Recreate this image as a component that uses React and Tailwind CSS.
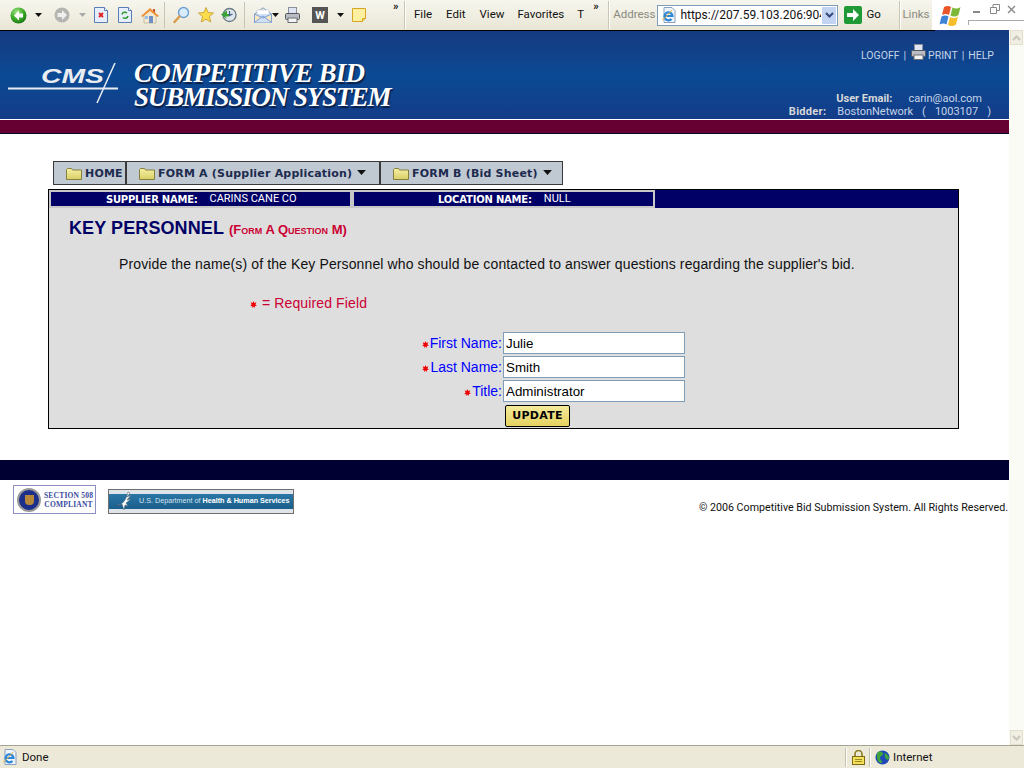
import React from "react";

const uiFont = "font-['Roboto','Noto_Sans',sans-serif]";

function Caret({ className = "" }) {
    return (
        <svg width="7" height="4" viewBox="0 0 7 4" className={className}>
            <path d="M0 0h7L3.500 4z" fill="#111" />
        </svg>
    );
}

function BackIcon() {
    return (
        <svg width="17" height="17" viewBox="0 0 17 17">
            <defs>
                <radialGradient id="backGreen" cx="40%" cy="30%" r="75%">
                    <stop offset="0" stopColor="#a6e88a" />
                    <stop offset="0.55" stopColor="#3eab2b" />
                    <stop offset="1" stopColor="#13720f" />
                </radialGradient>
            </defs>
            <circle cx="8.500" cy="8.500" r="8" fill="url(#backGreen)" />
            <path d="M9 3.500 4 8.500l5 5v-3h4v-4H9z" fill="#fff" />
        </svg>
    );
}

function ForwardIcon() {
    return (
        <svg width="16" height="16" viewBox="0 0 16 16">
            <circle cx="8" cy="8" r="7.500" fill="#b4b4b0" />
            <path d="M8 3l5 5-5 5v-3H3.500V6H8z" fill="#f0f0ee" />
        </svg>
    );
}

function PageIcon({ children }) {
    return (
        <svg width="14" height="16" viewBox="0 0 14 16">
            <path d="M.5.5h10l3 3v12H.5z" fill="#e6eefb" stroke="#5a7fb8" />
            <path d="M10.500.5v3h3" fill="#fff" stroke="#5a7fb8" />
            {children}
        </svg>
    );
}

function HomeIcon() {
    return (
        <svg width="18" height="17" viewBox="0 0 18 17">
            <path d="M3 8v8h12V8L9 3z" fill="#f4ead2" stroke="#a9a18b" strokeWidth=".6" />
            <path d="M0 9 9 1l9 8-1.500 1L9 4 1.500 10z" fill="#ef9238" />
            <path d="M12 2h2v4l-2-2z" fill="#c8552c" />
            <rect x="8" y="9" width="4" height="7" fill="#6f8fc7" />
            <rect x="4" y="9" width="3" height="3" fill="#9cc0ee" />
        </svg>
    );
}

function SearchIcon() {
    return (
        <svg width="17" height="18" viewBox="0 0 17 18">
            <circle cx="10.500" cy="6.500" r="5" fill="#d8ecfb" stroke="#6c9fd0" strokeWidth="1.400" />
            <path d="M6.500 10.500 1.500 16" stroke="#d59b4a" strokeWidth="2.400" strokeLinecap="round" />
        </svg>
    );
}

function StarIcon() {
    return (
        <svg width="16" height="16" viewBox="0 0 16 16">
            <path d="M8 .5l2.200 5 5.300.5-4 3.600 1.200 5.400L8 12.200 3.300 15l1.200-5.400-4-3.600 5.300-.5z" fill="#fbdc4c" stroke="#c2982a" strokeWidth=".8" />
        </svg>
    );
}

function HistoryIcon() {
    return (
        <svg width="16" height="16" viewBox="0 0 16 16">
            <circle cx="8.500" cy="8" r="6.500" fill="#dfe6ec" stroke="#6b7a84" strokeWidth="1.300" />
            <path d="M8.500 4v4.500l3-1.500" stroke="#3a5a8a" strokeWidth="1.200" fill="none" />
            <path d="M0 7.500 6 3.500v3.500h2v2.500H4.500L6 12z" fill="#3ba136" />
        </svg>
    );
}

function MailIcon() {
    return (
        <svg width="18" height="16" viewBox="0 0 18 16">
            <path d="M.5 7 9 .8 17.500 7v8.500H.5z" fill="#f6e7bf" stroke="#7c9fd4" />
            <path d="M3 7V3h12v4l-6 4z" fill="#fff" stroke="#b9c7de" strokeWidth=".6" />
            <path d="M.5 15.500 9 9l8.500 6.500M.5 7 9 11l8.500-4" fill="#cfe0f8" stroke="#7c9fd4" />
        </svg>
    );
}

function PrintIcon() {
    return (
        <svg width="15" height="16" viewBox="0 0 15 16">
            <rect x="3.500" y=".5" width="8" height="6" fill="#dfe4f4" stroke="#8b8f9a" />
            <rect x=".5" y="6.500" width="14" height="6" rx="1" fill="#b9bcc3" stroke="#55585f" />
            <rect x="3" y="11" width="9" height="4.500" fill="#f3f3f3" stroke="#6c6f76" />
        </svg>
    );
}

function NoteIcon() {
    return (
        <svg width="14" height="14" viewBox="0 0 14 14">
            <path d="M.5.5h13v10l-3 3H.5z" fill="#fdf0a0" stroke="#d9a520" />
            <path d="M13.500 10.500h-3v3" fill="#f1d873" stroke="#d9a520" />
        </svg>
    );
}

function IeIcon() {
    return (
        <svg width="16" height="16" viewBox="0 0 16 16">
            <path d="M3 .5h8l3 3v12H3z" fill="#eef3fb" stroke="#8aa0bf" />
            <path d="M3.500 9h8a4 4 0 1 0-1 3" fill="none" stroke="#2c86d8" strokeWidth="2.200" />
            <path d="M1 13c2-1 8-7 10-10" stroke="#f0b93a" strokeWidth="1" fill="none" />
        </svg>
    );
}

function WinFlag() {
    return (
        <svg width="25" height="23" viewBox="0 0 25 23">
            <path d="M5 3c2.500-1.500 5-1.500 7 0l-2 8c-2-1.500-4.500-1.500-7 0z" fill="#e8562a" />
            <path d="M13.500 3.500c2.500 1.500 5 1.500 8-.5l-2 8c-3 2-5.500 2-8 .5z" fill="#7cb83a" />
            <path d="M2.500 12.500c2.500-1.500 5-1.500 7 0l-2 8c-2-1.500-4.500-1.500-7 0z" fill="#3d83d8" />
            <path d="M11 13c2.500 1.500 5 1.500 8-.5l-2 8c-3 2-5.500 2-8 .5z" fill="#f4bf2a" />
        </svg>
    );
}

function Folder() {
    return (
        <svg width="16" height="12" viewBox="0 0 16 12">
            <defs>
                <linearGradient id="folderFill" x1="0" y1="0" x2="0" y2="1">
                    <stop offset="0" stopColor="#f6f0a4" />
                    <stop offset="1" stopColor="#d9cf66" />
                </linearGradient>
            </defs>
            <path d="M.5 11.500V1.500l1-1h4l1 1.500h9v9.500z" fill="url(#folderFill)" stroke="#85803e" />
        </svg>
    );
}

function Req({ className = "" }) {
    return (
        <svg width="7" height="7" viewBox="0 0 7 7" className={`shrink-0 mt-[3px] ${className}`}>
            <path d="M3.500 0l.8 2 2-.8-.9 2.300 1.600 1-2 .4L4.500 7l-1-1.500L2.500 7l-.4-2.100-2 .4 1.500-1.800L.7 1.300l2 .7z" fill="#f00000" />
        </svg>
    );
}

function Toolbar() {
    return (
        <div className={`h-[30px] shrink-0 flex items-center bg-gradient-to-b from-[#f7f6ee] to-[#e9e6d6] text-[11.500px] text-[#111] ${uiFont}`}>
            <div className="ml-[10px]"><BackIcon /></div>
            <Caret className="ml-[8px]" />
            <div className="ml-[12px]"><ForwardIcon /></div>
            <svg width="7" height="4" viewBox="0 0 7 4" className="ml-[9px]"><path d="M0 0h7L3.500 4z" fill="#aaa" /></svg>
            <div className="ml-[8px]">
                <PageIcon><path d="M5 6l4 4M9 6l-4 4" stroke="#e02020" strokeWidth="1.800" /></PageIcon>
            </div>
            <div className="ml-[10px]">
                <PageIcon>
                    <path d="M4 7.500a3 3 0 0 1 5-1.500" stroke="#2a9a2a" strokeWidth="1.500" fill="none" />
                    <path d="M10 9a3 3 0 0 1-5 1.500" stroke="#2a9a2a" strokeWidth="1.500" fill="none" />
                </PageIcon>
            </div>
            <div className="ml-[9px]"><HomeIcon /></div>
            <div className="ml-[5px] w-px h-[26px] bg-[#c8c5b2]" />
            <div className="ml-[8px]"><SearchIcon /></div>
            <div className="ml-[8px]"><StarIcon /></div>
            <div className="ml-[7px]"><HistoryIcon /></div>
            <div className="ml-[7px] w-px h-[26px] bg-[#c8c5b2]" />
            <div className="ml-[9px]"><MailIcon /></div>
            <Caret />
            <div className="ml-[6px]"><PrintIcon /></div>
            <div className="ml-[12px] w-[16px] h-[16px] bg-[#555] flex items-center justify-center text-white text-[11px] font-bold leading-none">W</div>
            <Caret className="ml-[9px]" />
            <div className="ml-[8px]"><NoteIcon /></div>
            <div className="ml-[27px] mb-[18px] w-[10px] text-[11px] font-bold leading-none">»</div>
            <div className="ml-px w-[2px] h-[28px] bg-white border-l border-[#c8c5b2]" />
            <span className="ml-[8px]">File</span>
            <span className="ml-[14px]">Edit</span>
            <span className="ml-[14px]">View</span>
            <span className="ml-[13px]">Favorites</span>
            <span className="ml-[13px]">T</span>
            <div className="ml-[9px] mb-[18px] w-[10px] text-[11px] font-bold leading-none">»</div>
            <div className="ml-[5px] w-[2px] h-[28px] bg-white border-l border-[#c8c5b2]" />
            <span className="ml-[3px] text-[#8a8a80]">Address</span>
            <div className="ml-[2px] w-[181px] h-[21px] flex items-center border border-[#7f9db9] bg-white">
                <div className="ml-[3px] shrink-0"><IeIcon /></div>
                <span className="ml-[3px] w-[142px] overflow-hidden whitespace-nowrap text-[12px]">https://207.59.103.206:9045</span>
                <div className="w-[16px] h-[19px] bg-[#c3d4f3] border border-white flex items-center justify-center">
                    <svg width="9" height="6" viewBox="0 0 9 6"><path d="M1 1l3.500 3.500L8 1" stroke="#33487a" strokeWidth="2" fill="none" /></svg>
                </div>
            </div>
            <div className="ml-[6px] w-[18px] h-[18px] rounded-[2px] bg-[#1f9a36] flex items-center justify-center">
                <svg width="14" height="12" viewBox="0 0 14 12"><path d="M7 0l6 6-6 6V8H1V4h6z" fill="#fff" /></svg>
            </div>
            <span className="ml-[4px] w-[14px]">Go</span>
            <div className="ml-[19px] w-[2px] h-[28px] bg-white border-l border-[#c8c5b2]" />
            <span className="ml-px w-[24px] text-[#8a8a80]">Links</span>
            <div className="ml-[6px] flex-1 h-full bg-white flex items-center relative">
                <div className="ml-[7px]"><WinFlag /></div>
                <div className="ml-[9px] mb-[7px] w-[7px] h-[2px] bg-[#888]" />
                <svg width="10" height="10" viewBox="0 0 10 10" className="ml-[10px] mb-[12px]">
                    <path d="M.5 3.500h6v6h-6zM3 3V.5h6.500v6H7" fill="none" stroke="#888" />
                </svg>
                <svg width="9" height="9" viewBox="0 0 9 9" className="ml-[7px] mb-[12px]">
                    <path d="M1 1l7 7M8 1L1 8" stroke="#888" strokeWidth="1.400" />
                </svg>
                <div className="absolute left-[36px] right-0 top-[20px] h-[5px] border-l border-t border-[#aaa]" />
            </div>
        </div>
    );
}

function CmsLogo() {
    return (
        <svg width="112" height="42" viewBox="0 0 112 42" className="shrink-0">
            <text x="33" y="20" fill="#e9edf2" fontFamily="'Liberation Sans', sans-serif" fontWeight="700" fontStyle="italic" fontSize="20" textLength="63" lengthAdjust="spacingAndGlyphs">CMS</text>
            <path d="M0 25.500h110" stroke="#e9edf2" strokeWidth="2" />
            <path d="M89 40 107 0" stroke="#e9edf2" strokeWidth="1.500" />
        </svg>
    );
}

function Header() {
    return (
        <div>
            <div className="h-px bg-[#153a80]"><div className="w-[935px] h-px bg-black" /></div>
            <div className="h-[88px] flex justify-between bg-gradient-to-b from-[#153a80] via-[#0a4a94] to-[#133c88]">
                <div className="flex items-start pl-[8px] pt-[32px]">
                    <CmsLogo />
                    <div className="ml-[14px] -mt-[2px] font-['Liberation_Serif',serif] font-bold italic text-[27px] leading-[24px] text-white [text-shadow:1px_2px_1px_#0a1f44] whitespace-nowrap">
                        <div className="tracking-[-0.7px]">COMPETITIVE BID</div>
                        <div className="tracking-[-1.300px]">SUBMISSION SYSTEM</div>
                    </div>
                </div>
                <div className={`flex flex-col items-end pr-[15px] pt-[15px] text-[11px] leading-[13px] text-[#c5d4e8] ${uiFont}`}>
                    <div className="flex items-center h-[18px] text-[10.500px]">
                        <span>LOGOFF</span>
                        <span className="ml-[4px]">|</span>
                        <div className="ml-[5px] mb-[6px]"><PrintIcon /></div>
                        <span className="ml-[2px]">PRINT</span>
                        <span className="ml-[4px]">|</span>
                        <span className="ml-[4px]">HELP</span>
                    </div>
                    <div className="mt-[28px] mr-[12px] flex">
                        <span className="font-bold text-[#d8d8d8]">User Email:</span>
                        <span className="ml-[16px]">carin@aol.com</span>
                    </div>
                    <div className="flex mr-[3px]">
                        <span className="font-bold text-[#d8d8d8] tracking-[0.3px]">Bidder:</span>
                        <span className="ml-[11px]">BostonNetwork</span>
                        <span className="ml-[9px]">(</span>
                        <span className="ml-[9px]">1003107</span>
                        <span className="ml-[9px]">)</span>
                    </div>
                </div>
            </div>
            <div className="h-px bg-white" />
            <div className="h-[13px] bg-[#660033]" />
            <div className="h-px bg-[#0a0a2a]" />
        </div>
    );
}

function NavBar() {
    const caret = <Caret className="ml-[5px] -mt-[3px] w-[9px] h-[5px]" />;
    return (
        <div className="ml-[53px] mt-[27px] w-[510px] h-[24px] flex border border-[#3a3a3a] bg-[#c0c8d2] text-[11px] font-bold text-[#1c2b4e] font-['DejaVu_Sans',sans-serif] tracking-[0.2px]">
            <div className="w-[73px] pl-[12px] pt-[2px] h-full flex items-center border-r-2 border-[#3a3a3a]">
                <Folder /><span className="ml-[3px]">HOME</span>
            </div>
            <div className="w-[254px] pl-[12px] pt-[2px] h-full flex items-center border-r-2 border-[#3a3a3a]">
                <Folder /><span className="ml-[3px] whitespace-nowrap">FORM A (Supplier Application)</span>{caret}
            </div>
            <div className="flex-1 pl-[12px] pt-[2px] h-full flex items-center">
                <Folder /><span className="ml-[3px] whitespace-nowrap">FORM B (Bid Sheet)</span>{caret}
            </div>
        </div>
    );
}

function Field({ label, value }) {
    return (
        <div className="flex items-center justify-end h-[24px]">
            <Req />
            <label className="ml-px mr-px pt-[2px] text-[14px] text-[#0000ff]">{label}:</label>
            <input
                readOnly
                value={value}
                className="w-[182px] h-[22px] px-[2px] pt-[2px] bg-white border border-[#7f9db9] text-[13.330px] text-black outline-none"
            />
        </div>
    );
}

function Panel() {
    return (
        <div className="ml-[48px] mt-[4px] w-[911px] h-[240px] border border-black bg-[#dedede] font-['Liberation_Sans',Arial,sans-serif]">
            <div className="flex h-[18px] bg-[#c8c8c8] pt-[2px] pl-[2px] text-[10px] text-white font-['DejaVu_Sans',sans-serif]">
                <div className="w-[299px] h-[14px] bg-[#000066] flex items-center">
                    <span className="ml-[55px] font-bold tracking-[-0.25px]">SUPPLIER NAME:</span>
                    <span className={`ml-[12px] pt-px text-[11px] ${uiFont}`}>CARINS CANE CO</span>
                </div>
                <div className="ml-[4px] w-[299px] h-[14px] bg-[#000066] flex items-center">
                    <span className="ml-[84px] font-bold tracking-[-0.2px]">LOCATION NAME:</span>
                    <span className={`ml-[12px] pt-px text-[11px] ${uiFont}`}>NULL</span>
                </div>
                <div className="ml-[2px] flex-1 -mt-[2px] bg-[#000066]" />
            </div>
            <div className="ml-[20px] mt-[9px] flex items-baseline">
                <span className="text-[18px] font-bold text-[#000066] leading-[22px] tracking-[0.1px]">KEY PERSONNEL</span>
                <span className="ml-[5px] text-[13px] font-bold text-[#cc0033] [font-variant:small-caps]">(Form A Question M)</span>
            </div>
            <p className="mt-[15px] ml-[70px] text-[14px] leading-[18px] text-[#111] whitespace-nowrap tracking-[0.116px]">
                Provide the name(s) of the Key Personnel who should be contacted to answer questions regarding the supplier's bid.
            </p>
            <div className="mt-[21px] ml-[201px] flex items-center text-[14px] leading-[18px] text-[#cc0033]">
                <Req />
                <span className="ml-[5px] tracking-[0.12px]">= Required Field</span>
            </div>
            <div className="mt-[19px] w-[636px]">
                <Field label="First Name" value="Julie" />
                <Field label="Last Name" value="Smith" />
                <Field label="Title" value="Administrator" />
            </div>
            <button className="block ml-[456px] mt-[2px] w-[65px] h-[22px] rounded-[2px] border border-black bg-gradient-to-b from-[#f5ea9a] to-[#e4d25f] text-[11px] font-bold tracking-[0.3px] text-black font-['DejaVu_Sans',sans-serif] leading-none">
                UPDATE
            </button>
        </div>
    );
}

function Section508() {
    return (
        <div className="w-[83px] h-[29px] border border-[#8d8fc0] bg-white flex items-center">
            <div className="ml-[3px] w-[24px] h-[24px] rounded-full border-2 border-[#9a9a9a] bg-[#1c2f8a] flex items-center justify-center shrink-0">
                <div className="w-[9px] h-[10px] bg-[#b5873a] rounded-b-[4px]" />
            </div>
            <div className="ml-[3px] text-[7.500px] leading-[9px] font-bold text-[#3b4aa0] font-['Liberation_Serif',serif] whitespace-nowrap tracking-[0.2px] text-center">
                <div>SECTION 508</div>
                <div>COMPLIANT</div>
            </div>
        </div>
    );
}

function HhsLogo() {
    return (
        <div className="relative w-[186px] h-[25px] border border-[#6f6f6f] bg-[#dfe4e8] flex items-center">
            <div className="w-full h-[15px] bg-gradient-to-b from-[#2a76a4] to-[#1a5f8e] flex items-center pl-[30px]">
                <span className="text-[7.200px] text-[#d6e2ec] font-['Liberation_Sans',sans-serif] whitespace-nowrap">
                    U.S. Department of <b className="text-white">Health &amp; Human Services</b>
                </span>
            </div>
            <svg width="22" height="23" viewBox="0 0 22 23" className="absolute left-[6px] top-0">
                <path d="M2 15c5 0 9-4 11-13l2 1-3 4 4-2-4 5 4-1-5 4 2 3-3-1-1 5-2-6c-2 1-4 1-5 1z" fill="#fff" stroke="#4a5a68" strokeWidth=".5" />
            </svg>
        </div>
    );
}

function Scrollbar() {
    return (
        <div className="w-[15px] shrink-0 bg-[#fbfbf6] flex flex-col justify-between">
            <div className="h-[15px] mx-px bg-[#f1efe3] border border-[#e2dfcf] flex items-center justify-center">
                <svg width="9" height="6" viewBox="0 0 9 6"><path d="M1 5l3.500-3.500L8 5" stroke="#c9c7b8" strokeWidth="2" fill="none" /></svg>
            </div>
            <div className="h-[15px] mx-px bg-[#f1efe3] border border-[#e2dfcf] flex items-center justify-center">
                <svg width="9" height="6" viewBox="0 0 9 6"><path d="M1 1l3.500 3.500L8 1" stroke="#c9c7b8" strokeWidth="2" fill="none" /></svg>
            </div>
        </div>
    );
}

function StatusBar() {
    return (
        <div className={`h-[23px] shrink-0 flex items-center border-t border-[#a5a394] bg-[#ece9d8] text-[11.500px] text-[#111] ${uiFont}`}>
            <div className="ml-[2px]"><IeIcon /></div>
            <span className="ml-[4px] pt-[2px]">Done</span>
            <div className="ml-auto w-[2px] h-[19px] border-l border-[#c4c1ae] bg-white" />
            <svg width="13" height="15" viewBox="0 0 13 15" className="ml-[5px]">
                <path d="M3 7V4a3.500 3.500 0 0 1 7 0v3" fill="none" stroke="#8d7a20" strokeWidth="1.600" />
                <rect x=".5" y="6.500" width="12" height="8" fill="#f4e05a" stroke="#7d6b14" />
                <path d="M3 9.500h7M3 11.500h7" stroke="#9a8820" />
            </svg>
            <div className="ml-[4px] w-[2px] h-[19px] border-l border-[#c4c1ae] bg-white" />
            <svg width="15" height="15" viewBox="0 0 15 15" className="ml-[4px]">
                <circle cx="7.500" cy="7.500" r="7" fill="#1f48b8" />
                <path d="M3 2c3-1 5 0 5 2S5 6 5 8s2 2 2 4-3 1-4-1-2-7 0-9zM10 3c2 1 4 3 4 5s-2 2-3 1-2-5-1-6z" fill="#3fa53a" />
            </svg>
            <span className="ml-[3px] pt-[2px] w-[131px]">Internet</span>
        </div>
    );
}

export default function App() {
    return (
        <div className="w-[1024px] h-[768px] flex flex-col overflow-hidden bg-white">
            <Toolbar />
            <div className="flex-1 flex min-h-0">
                <div className="w-[1009px] flex flex-col">
                    <Header />
                    <NavBar />
                    <Panel />
                    <div className="mt-[31px] h-[20px] bg-[#000033]" />
                    <div className="flex items-start pl-[13px] pt-[5px]">
                        <Section508 />
                        <div className="ml-[12px] mt-[4px]"><HhsLogo /></div>
                        <span className={`ml-auto mt-[16px] mr-px text-[10.700px] leading-[14px] text-[#111] whitespace-nowrap ${uiFont}`}>
                            © 2006 Competitive Bid Submission System. All Rights Reserved.
                        </span>
                    </div>
                </div>
                <Scrollbar />
            </div>
            <StatusBar />
        </div>
    );
}
